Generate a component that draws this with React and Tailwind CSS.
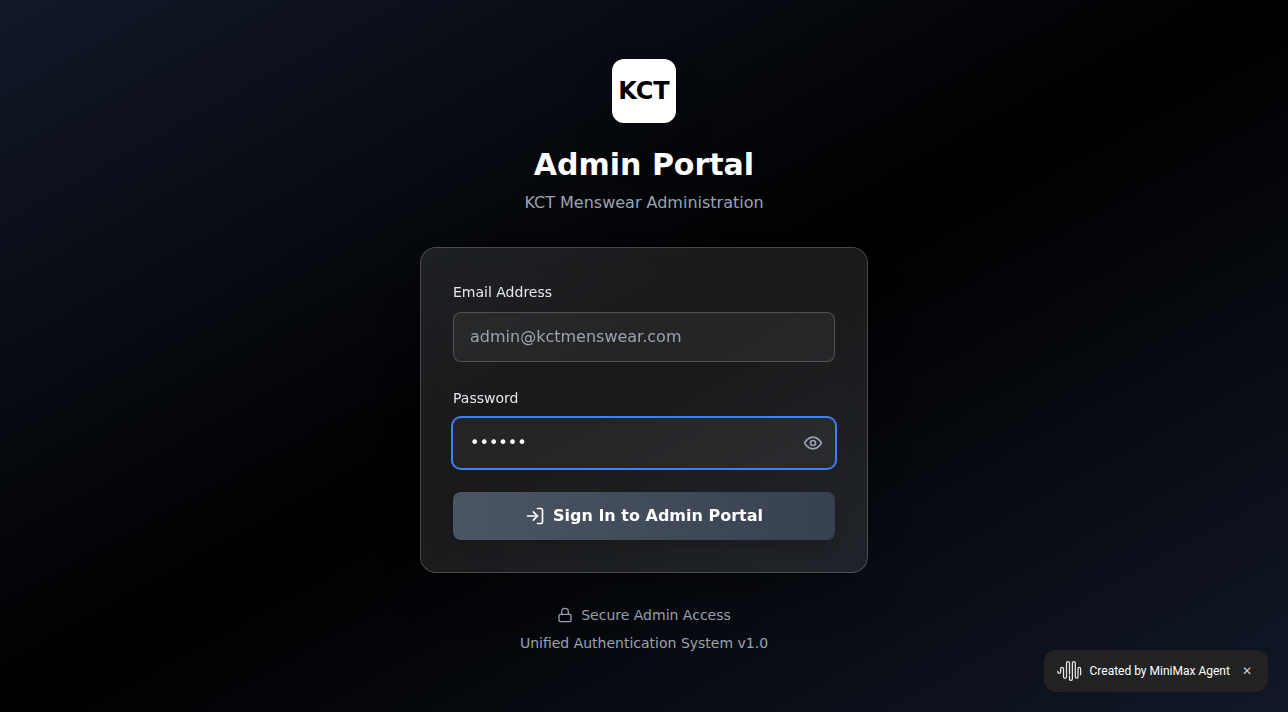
import React from 'react';
import { LogIn, Lock } from 'lucide-react';

function WaveLogo() {
  return (
    <svg width="26" height="22" viewBox="0 0 26 22" fill="none" stroke="#e6e6e6" strokeWidth="1.25" strokeLinecap="round">
      <path d="M1.8 11.2V12a1.4 1.4 0 0 0 2.8 0V8.7a1.45 1.45 0 0 1 2.9 0V16.8a1.5 1.5 0 0 0 3 0V3a1.5 1.5 0 0 1 3 0V14" />
      <path d="M13.5 15.8V19a1.45 1.45 0 0 0 2.9 0V3a1.45 1.45 0 0 1 2.9 0V16.8a1.35 1.35 0 0 0 2.7 0V8.6a1.3 1.3 0 0 1 2.6 0V14.8" />
    </svg>
  );
}

function EyeIcon() {
  return (
    <svg width="20" height="20" viewBox="0 0 24 24" fill="none" stroke="currentColor" strokeWidth="2" strokeLinecap="round" strokeLinejoin="round">
      <path d="M2 12s3-7 10-7 10 7 10 7-3 7-10 7-10-7-10-7Z" />
      <circle cx="12" cy="12" r="3" />
    </svg>
  );
}

export default function App() {
  return (
    <div className="flex h-[712px] items-center justify-center overflow-hidden bg-[linear-gradient(to_bottom_right,#111827,#000,#111827)] p-4 font-['DejaVu_Sans',sans-serif]">
      <div className="w-full max-w-md">
        <div className="mb-8 text-center">
          <div className="mx-auto mb-6 flex h-16 w-16 items-center justify-center rounded-xl bg-white shadow-2xl">
            <span className="text-2xl font-bold text-black">KCT</span>
          </div>
          <h1 className="mb-2 text-3xl font-bold text-white">Admin Portal</h1>
          <p className="text-[#9ca3af]">KCT Menswear Administration</p>
        </div>
        <form className="space-y-6 rounded-2xl border border-white/20 bg-white/10 p-8 shadow-2xl backdrop-blur-lg">
          <div>
            <label className="mb-2 block text-sm leading-6 text-[#e5e7eb]">Email Address</label>
            <input type="email" placeholder="admin@kctmenswear.com" className="block w-full rounded-lg border border-white/20 bg-white/5 px-4 py-3 text-white placeholder:text-[#9ca3af]" />
          </div>
          <div>
            <label className="mb-2 block text-sm leading-6 text-[#e5e7eb]">Password</label>
            <div className="relative">
              <input type="password" defaultValue="secret" className="block w-full rounded-lg border border-transparent bg-white/5 px-4 py-3 pr-12 text-white ring-2 ring-[#3b82f6] outline-none" />
              <button type="button" className="absolute top-[15px] right-3 text-[#9ca3af]"><EyeIcon /></button>
            </div>
          </div>
          <button type="button" className="flex h-12 w-full items-center justify-center gap-2 rounded-lg bg-[linear-gradient(to_right,#4b5563,#374151)] font-semibold text-white shadow-lg">
            <LogIn size={20} />
            <span>Sign In to Admin Portal</span>
          </button>
        </form>
        <div className="mt-8 text-center text-sm text-[#9ca3af]">
          <div className="flex items-center justify-center gap-2"><Lock size={16} /><span>Secure Admin Access</span></div>
          <p className="mt-2">Unified Authentication System v1.0</p>
        </div>
      </div>
      <div className="fixed right-5 bottom-5 flex h-[42px] w-[224px] items-center rounded-xl bg-[#222] pl-3 font-[Roboto,sans-serif] text-xs text-white">
        <WaveLogo />
        <span className="ml-[7.5px]">Created by MiniMax Agent</span>
        <button type="button" className="ml-[12.5px] font-medium text-[#ccc]">✕</button>
      </div>
    </div>
  );
}
